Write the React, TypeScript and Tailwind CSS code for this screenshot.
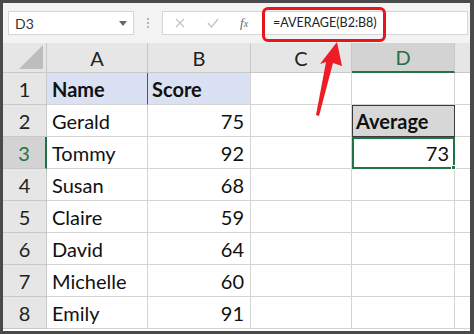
import React from 'react';

const font = { fontFamily: 'Lato, "Open Sans", sans-serif' };

const rows: [string, string][] = [
  ['Name', 'Score'],
  ['Gerald', '75'],
  ['Tommy', '92'],
  ['Susan', '68'],
  ['Claire', '59'],
  ['David', '64'],
  ['Michelle', '60'],
  ['Emily', '91'],
];

function FormulaBar() {
  return (
    <div className="relative flex h-[40px] items-center bg-[#f3f3f3] pl-[5px] pr-[2px]">
      {/* name box */}
      <div className="flex h-[24px] w-[126px] items-center justify-between border border-[#d6d6d6] bg-white pl-[6px] pr-[6px]">
        <span className="text-[14px] text-[#333]">D3</span>
        <svg width="8" height="5" viewBox="0 0 8 5">
          <path d="M0 0h8L4 5z" fill="#666" />
        </svg>
      </div>
      <div className="flex w-[28px] flex-col items-center gap-[2px]">
        <span className="h-[2px] w-[2px] bg-[#b5b5b5]" />
        <span className="h-[2px] w-[2px] bg-[#b5b5b5]" />
        <span className="h-[2px] w-[2px] bg-[#b5b5b5]" />
      </div>
      {/* formula box */}
      <div className="flex h-[24px] flex-1 items-center border border-[#d6d6d6] bg-white">
        <svg className="ml-[12px]" width="10" height="10" viewBox="0 0 10 10">
          <path d="M1 1l8 8M9 1l-8 8" stroke="#c4c4c4" strokeWidth="1.3" />
        </svg>
        <svg className="ml-[22px]" width="12" height="10" viewBox="0 0 12 10">
          <path d="M1 5l3.5 4L11 1" stroke="#c4c4c4" strokeWidth="1.4" fill="none" />
        </svg>
        <span className="ml-[21px] text-[13px] italic text-[#666]" style={{ fontFamily: '"Liberation Serif", serif' }}>
          f<span className="text-[10px]">x</span>
        </span>
        <span className="ml-[25px] text-[12.5px] text-[#222]">=AVERAGE(B2:B8)</span>
      </div>
      {/* red highlight box */}
      <div className="absolute left-[259px] top-[4px] h-[35px] w-[124px] rounded-[6px] border-[3px] border-[#e8161b]" />
    </div>
  );
}

function HeaderRow() {
  const cols = [
    { l: 'A', w: 'w-[101px]' },
    { l: 'B', w: 'w-[103px]' },
    { l: 'C', w: 'w-[101px]' },
  ];
  return (
    <div className="flex h-[30px] bg-[#e6e6e6]">
      <div className="relative w-[44px] border-r border-b border-[#c8c8c8]">
        <svg className="absolute bottom-[3px] right-[3px]" width="24" height="24" viewBox="0 0 24 24">
          <path d="M24 0V24H0z" fill="#bdbdbd" />
        </svg>
      </div>
      {cols.map(c => (
        <div
          key={c.l}
          className={`${c.w} flex items-center justify-center border-r border-b border-[#c8c8c8] text-[20px] text-[#222]`}
        >
          {c.l}
        </div>
      ))}
      <div className="flex w-[103px] items-center justify-center border-r border-[#c8c8c8] border-b-2 border-b-[#217346] bg-[#d3d3d3] text-[20px] text-[#217346]">
        D
      </div>
      <div className="flex-1 border-b border-[#c8c8c8]" />
    </div>
  );
}

function DataRow({ i, name, score }: { i: number; name: string; score: string }) {
  const first = i === 0;
  const sel = i === 2;
  return (
    <div className="flex h-[32px] text-[20px] text-[#111]">
      <div
        className={`flex w-[44px] items-center justify-center border-b border-[#c8c8c8] ${
          sel
            ? 'border-r-2 border-r-[#217346] bg-[#d3d3d3] text-[#217346]'
            : 'border-r border-r-[#c8c8c8] bg-[#e6e6e6] text-[#222]'
        }`}
      >
        {i + 1}
      </div>
      <div
        className={`flex w-[101px] items-center border-r border-b pl-[5px] ${
          first ? 'border-r-[#555] border-b-[#d4d4d4] bg-[#d9e1f2] font-bold' : 'border-[#d4d4d4]'
        }`}
      >
        {name}
      </div>
      <div
        className={`flex w-[103px] items-center border-r border-b ${
          first ? 'border-[#d4d4d4] bg-[#d9e1f2] pl-[4px] font-bold' : 'justify-end border-[#d4d4d4] pr-[6px]'
        }`}
      >
        {score}
      </div>
      <div className="w-[101px] border-r border-b border-[#d4d4d4]" />
      {i === 1 ? (
        <div className="flex w-[103px] items-center border border-[#3a3a3a] bg-[#d7d7d7] pl-[3px] font-bold">
          Average
        </div>
      ) : i === 2 ? (
        <div className="relative flex w-[103px] items-center justify-end border-2 border-[#217346] pr-[4px]">
          73
          <span className="absolute -bottom-[3px] -right-[3px] h-[5px] w-[5px] border border-white bg-[#217346]" />
        </div>
      ) : (
        <div className="w-[103px] border-r border-b border-[#d4d4d4]" />
      )}
      <div className="flex-1 border-b border-[#d4d4d4]" />
    </div>
  );
}

export default function App() {
  return (
    <div className="h-[334px] w-[474px] overflow-hidden bg-[#4a4a4a] p-[3px] pr-[4px]" style={font}>
      <div className="relative h-[328px] overflow-hidden bg-white">
        <FormulaBar />
        <HeaderRow />
        {rows.map((r, i) => (
          <DataRow key={i} i={i} name={r[0]} score={r[1]} />
        ))}
        {/* red arrow pointing at the formula */}
        <svg className="absolute left-0 top-0" width="467" height="328" viewBox="3 3 467 328">
          <path d="M337 42 L342 66 L333 63 L319 116 L316 115 L326 62 L320 64 Z" fill="#ee1c24" />
        </svg>
      </div>
    </div>
  );
}
